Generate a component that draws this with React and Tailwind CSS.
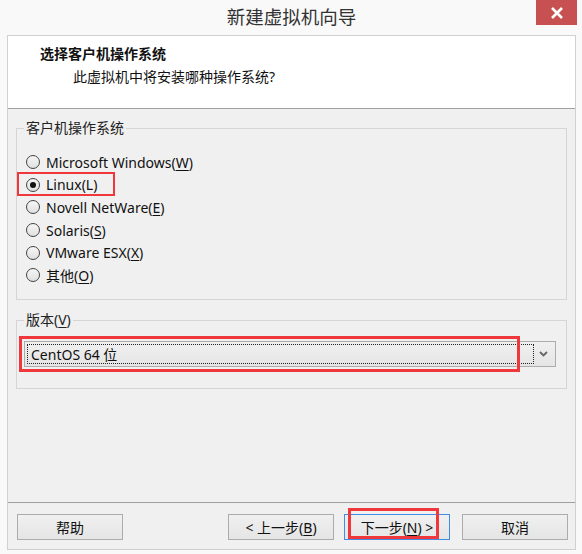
import React from 'react';

const font = { fontFamily: '"Noto Sans", "Noto Sans CJK SC", sans-serif' };

const osList = [
    { label: 'Microsoft Windows(', key: 'W', tail: ')' },
    { label: 'Linux(L)', key: '', tail: '', checked: true },
    { label: 'Novell NetWare(', key: 'E', tail: ')' },
    { label: 'Solaris(', key: 'S', tail: ')' },
    { label: 'VMware ESX(', key: 'X', tail: ')' },
    { label: '其他(', key: 'O', tail: ')' },
];

const Radio = ({ checked }) => (
    <span className="w-[14px] h-[14px] rounded-full border border-[#444] bg-gradient-to-b from-[#f6f6f6] to-[#e0e0e0] flex items-center justify-center shrink-0">
        {checked && <span className="w-[6px] h-[6px] rounded-full bg-[#111]" />}
    </span>
);

const Button = ({ children, primary, className = '' }) => (
    <button
        className={`h-[26px] text-[14px] text-[#111] border bg-gradient-to-b from-[#f0f0f0] to-[#e5e5e5] flex items-center justify-center ${primary ? 'border-[#3c8ee6]' : 'border-[#acacac]'} ${className}`}
    >
        {children}
    </button>
);

export default function App() {
    return (
        <div className="relative w-[582px] h-[554px] bg-[#f9f9f9] pl-[7px] pr-[6px] pb-[4px] flex flex-col text-[#111]" style={font}>
            {/* Title bar */}
            <div className="h-[35px] flex items-center justify-center text-[18.5px] text-[#333] pb-[2px]">
                新建虚拟机向导
            </div>
            <div className="absolute top-0 right-[5px] w-[41px] h-[25px] bg-[#c75050] flex items-center justify-center">
                <svg width="14" height="12" viewBox="0 0 14 12">
                    <path d="M2 1 L12 11 M12 1 L2 11" stroke="#fff" strokeWidth="2.6" />
                </svg>
            </div>

            {/* Window body */}
            <div className="flex-1 border border-[#d0d0d0] bg-[#f0f0f0] flex flex-col">
                {/* Header */}
                <div className="h-[73px] shrink-0 bg-white border-b border-[#a0a0a0] pl-[32px] pt-[8px]">
                    <div className="text-[14px] font-bold leading-[20px] h-[20px]">选择客户机操作系统</div>
                    <div className="text-[14px] leading-[20px] pl-[33px] mt-[3px]">此虚拟机中将安装哪种操作系统?</div>
                </div>

                {/* Content */}
                <div className="flex-1 px-[8px] pt-[9px]">
                    <fieldset className="border border-[#d5d5d5] h-[182px]">
                        <legend className="text-[14px] leading-[20px] ml-[7px] px-[2px] text-[#222]">客户机操作系统</legend>
                        <div className="pt-[13px] pl-[9px] flex flex-col">
                            {osList.map((os) => (
                                <div key={os.label} className="h-[22.6px] flex items-center gap-[6px] text-[14px]">
                                    <Radio checked={os.checked} />
                                    <span>
                                        {os.label}
                                        {os.key && <u className="underline-offset-2">{os.key}</u>}
                                        {os.tail}
                                    </span>
                                </div>
                            ))}
                        </div>
                    </fieldset>

                    <fieldset className="border border-[#d5d5d5] h-[79px] mt-[10px]">
                        <legend className="text-[14px] leading-[20px] ml-[7px] px-[2px] text-[#222]">
                            版本(<u className="underline-offset-2">V</u>)
                        </legend>
                        <div className="mt-[11px] ml-[7px] mr-[10px] h-[26px] border border-[#acacac] bg-gradient-to-b from-[#f0f0f0] to-[#e5e5e5] flex items-center p-[2px]">
                            <div className="flex-1 h-full border border-dotted border-[#222] flex items-center pl-[3px] text-[14px]">
                                CentOS 64 位
                            </div>
                            <div className="w-[19px] h-full flex items-center justify-center">
                                <svg width="9" height="6" viewBox="0 0 9 6">
                                    <path d="M1 1 L4.5 4.5 L8 1" stroke="#666" strokeWidth="1.8" fill="none" />
                                </svg>
                            </div>
                        </div>
                    </fieldset>
                </div>

                {/* Footer */}
                <div className="h-[47px] shrink-0 border-t border-[#a0a0a0] pt-[11px] pl-[9px] pr-[7px] flex">
                    <Button className="w-[106px]">帮助</Button>
                    <div className="flex-1" />
                    <Button className="w-[106px]">
                        &lt; 上一步(<u className="underline-offset-2">B</u>)
                    </Button>
                    <Button primary className="w-[106px] ml-[10px]">
                        下一步(<u className="underline-offset-2">N</u>) &gt;
                    </Button>
                    <Button className="w-[106px] ml-[12px]">取消</Button>
                </div>
            </div>

            {/* Red annotation boxes */}
            <div className="absolute left-[17px] top-[172px] w-[98px] h-[24px] border-2 border-[#f0383c]" />
            <div className="absolute left-[19px] top-[336px] w-[501px] h-[36px] border-[3px] border-[#f0383c]" />
            <div className="absolute left-[348px] top-[508px] w-[91px] h-[31px] border-[3px] border-[#f0383c]" />
        </div>
    );
}
